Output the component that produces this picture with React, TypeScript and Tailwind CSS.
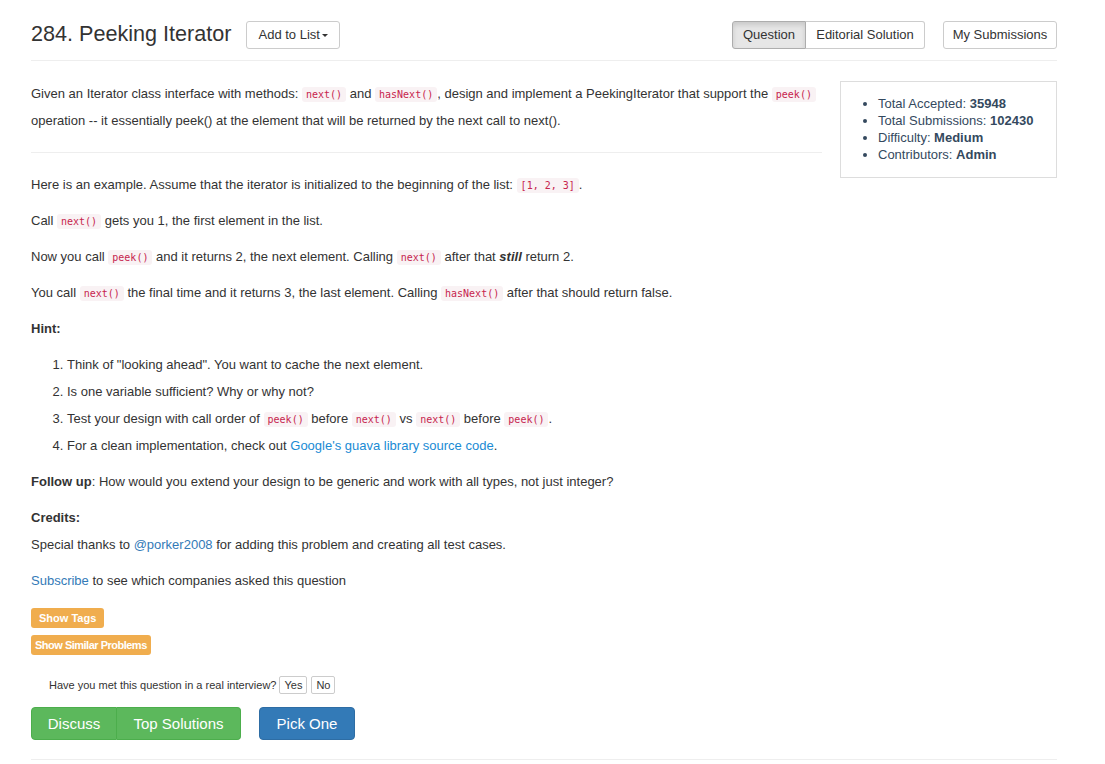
import React from "react";

const Code = ({ children }: { children: React.ReactNode }) => (
  <code className="font-['DejaVu_Sans_Mono',monospace] text-[10px] leading-none text-[#c7254e] bg-[#f9f2f4] px-[4px] py-[2px] rounded-[3px]">
    {children}
  </code>
);

export default function App() {
  return (
    <div className="w-[1105px] min-h-[764px] bg-white font-['Liberation_Sans',Arial,sans-serif] text-[#333] text-[13px]">
      <div className="mx-[31px] w-[1026px]">
        {/* header */}
        <div className="flex items-center justify-between pt-[21px] pb-[11px] border-b border-[#eee]">
          <div className="flex items-center">
            <h3 className="text-[21.6px] leading-[28px] text-[#333] mt-[-2px]">284. Peeking Iterator</h3>
            <button className="ml-[15px] h-[28px] px-[11px] border border-[#ccc] rounded-[3px] text-[13px] text-[#333] bg-white flex items-center">
              Add to List
              <span className="ml-[2px] inline-block w-0 h-0 border-l-[3px] border-r-[3px] border-t-[3px] border-l-transparent border-r-transparent border-t-[#333]" />
            </button>
          </div>
          <div className="flex items-center">
            <div className="flex">
              <button className="h-[28px] w-[74px] border border-[#adadad] bg-[#e6e6e6] rounded-l-[3px] text-[13px] shadow-[inset_0_3px_5px_rgba(0,0,0,0.125)]">Question</button>
              <button className="h-[28px] w-[119px] border border-l-0 border-[#ccc] bg-white rounded-r-[3px] text-[13px]">Editorial Solution</button>
            </div>
            <button className="ml-[18px] h-[28px] w-[114px] border border-[#ccc] bg-white rounded-[3px] text-[13px]">My Submissions</button>
          </div>
        </div>

        <div className="flex gap-[18px] mt-[20px]">
          {/* main column */}
          <div className="w-[791px] leading-[27px]">
            <p className="mt-[-1px]">
              Given an Iterator class interface with methods: <Code>next()</Code> and <Code>hasNext()</Code>, design and implement a PeekingIterator that support the <Code>peek()</Code> operation -- it essentially peek() at the element that will be returned by the next call to next().
            </p>
            <hr className="border-t border-[#eee] mt-[18px] mb-[18px]" />
            <p className="mb-[9px]">Here is an example. Assume that the iterator is initialized to the beginning of the list: <Code>[1, 2, 3]</Code>.</p>
            <p className="mb-[9px]">Call <Code>next()</Code> gets you 1, the first element in the list.</p>
            <p className="mb-[9px]">Now you call <Code>peek()</Code> and it returns 2, the next element. Calling <Code>next()</Code> after that <b><i>still</i></b> return 2.</p>
            <p className="mb-[9px]">You call <Code>next()</Code> the final time and it returns 3, the last element. Calling <Code>hasNext()</Code> after that should return false.</p>
            <p className="mb-[9px]"><b>Hint:</b></p>
            <ol className="list-decimal pl-[36px] mb-[9px]">
              <li>Think of "looking ahead". You want to cache the next element.</li>
              <li>Is one variable sufficient? Why or why not?</li>
              <li>Test your design with call order of <Code>peek()</Code> before <Code>next()</Code> vs <Code>next()</Code> before <Code>peek()</Code>.</li>
              <li>For a clean implementation, check out <a className="text-[#1a8bd4]">Google's guava library source code</a>.</li>
            </ol>
            <p className="mb-[9px]"><b>Follow up</b>: How would you extend your design to be generic and work with all types, not just integer?</p>
            <p className="mb-[9px]"><b>Credits:</b><br />Special thanks to <a className="text-[#337ab7]">@porker2008</a> for adding this problem and creating all test cases.</p>
            <p className="mb-[9px]"><a className="text-[#337ab7]">Subscribe</a> to see which companies asked this question</p>

            <div className="flex flex-col items-start gap-[7px] mt-[14px] leading-none">
              <span className="bg-[#f0ad4e] text-white font-bold text-[11px] h-[20px] px-[8px] flex items-center rounded-[3px]">Show Tags</span>
              <span className="bg-[#f0ad4e] text-white font-bold text-[11px] h-[20px] px-[4px] flex items-center rounded-[3px] tracking-[-0.5px]">Show Similar Problems</span>
            </div>

            <div className="flex items-center mt-[21px] ml-[18px] text-[11px] leading-none">
              <span>Have you met this question in a real interview?</span>
              <button className="ml-[3px] h-[18px] px-[4px] border border-[#ccc] bg-white rounded-[2px] text-[11px]">Yes</button>
              <button className="ml-[4px] h-[18px] px-[4px] border border-[#ccc] bg-white rounded-[2px] text-[11px]">No</button>
            </div>

            <div className="flex items-center mt-[13px]">
              <div className="flex">
                <button className="h-[33px] w-[86px] bg-[#5cb85c] border border-[#4cae4c] text-white text-[15px] rounded-l-[4px]">Discuss</button>
                <button className="h-[33px] w-[124px] bg-[#5cb85c] border border-l-0 border-[#4cae4c] text-white text-[15px] rounded-r-[4px]">Top Solutions</button>
              </div>
              <button className="ml-[18px] h-[33px] w-[96px] bg-[#337ab7] border border-[#2e6da4] text-white text-[15px] rounded-[4px]">Pick One</button>
            </div>
          </div>

          {/* side panel */}
          <div className="w-[217px] self-start border border-[#ddd] px-[20px] pt-[13px] pb-[14px] text-[#34495e] leading-[17px] text-[13px]">
            <ul className="list-disc pl-[17px]">
              <li>Total Accepted: <b>35948</b></li>
              <li>Total Submissions: <b>102430</b></li>
              <li>Difficulty: <b>Medium</b></li>
              <li>Contributors: <b>Admin</b></li>
            </ul>
          </div>
        </div>
        <hr className="border-t border-[#eee] mt-[19px]" />
      </div>
    </div>
  );
}
